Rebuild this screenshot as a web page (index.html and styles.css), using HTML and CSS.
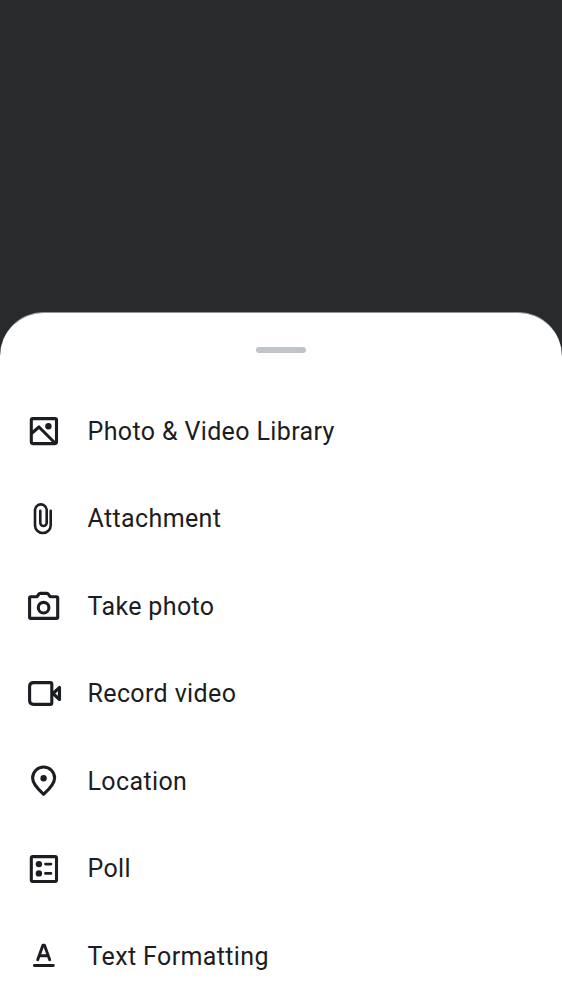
FILE: index.html
```html
<!DOCTYPE html>
<html lang="en">
<head><meta charset="utf-8"><title>Attach</title><link rel="stylesheet" href="styles.css"></head>
<body>
<main class="sheet">
<div class="handle"></div>
<ul class="menu">
<li class="item"><svg class="icon" viewBox="0 0 36 36"><rect x="6.3" y="5.600" width="25.200" height="25" rx="1.500"/><path d="M6.500 20.500l7.500-6.500L30.500 30.500"/><circle class="solid" cx="23.400" cy="13.300" r="3.200"/></svg><span class="label">Photo &amp; Video Library</span></li>
<li class="item"><svg class="icon" viewBox="0 -0.5 36 36"><path class="thin" d="M25.700 10.200v14.500a7.850 7.850 0 0 1-15.700 0V9.700a5.850 5.850 0 0 1 11.700 0v12.600a3.200 3.200 0 0 1-6.400 0V10.200"/></svg><span class="label">Attachment</span></li>
<li class="item"><svg class="icon" viewBox="0 0 36 36"><path d="M5.800 8.700h5.400q1 0 1.500-.8l1.100-1.700q.5-.8 1.500-.8h6.600q1 0 1.500.8l1.100 1.700q.5.800 1.500.8h5.500q1.200 0 1.200 1.200v19.300q0 1.200-1.200 1.200H5.800q-1.200 0-1.200-1.200V9.900q0-1.200 1.200-1.200z"/><circle cx="18.600" cy="19.700" r="5.300"/></svg><span class="label">Take photo</span></li>
<li class="item"><svg class="icon" viewBox="0 -0.5 36 36"><path d="M8.600 7.100h16.700q1.500 0 1.500 1.500v18.800q0 1.500-1.500 1.500H8.600q-4 0-4-4V11.100q0-4 4-4z"/><path d="M34.500 12v12L28 18z"/></svg><span class="label">Record video</span></li>
<li class="item"><svg class="icon" viewBox="0 0 36 36"><path d="M18.600 31.300C15 28 7.600 21.500 7.600 15a11 11 0 0 1 22 0C29.600 21.500 22.200 28 18.600 31.300z"/><circle class="solid" cx="18.600" cy="15.200" r="3.200"/></svg><span class="label">Location</span></li>
<li class="item"><svg class="icon" viewBox="0 -0.5 36 36"><rect x="6.300" y="6.100" width="25.200" height="24.900" rx="1.500"/><circle class="solid" cx="13.900" cy="13.600" r="3.200"/><circle class="solid" cx="13.900" cy="22.900" r="3.200"/><path class="round" d="M20.500 13.600h5.400M20.500 22.900h5.400"/></svg><span class="label">Poll</span></li>
<li class="item"><svg class="icon" viewBox="0 0 36 36"><path class="round" d="M9.400 27.500h18.900M12.700 21.700l5.200-14.400h1.600l5.200 14.400M14.700 17.800h8"/></svg><span class="label">Text Formatting</span></li>
</ul>
</main>
</body></html>
```
FILE: styles.css
```css
body { margin: 0; height: 1000px; overflow: hidden; background: #292a2c; box-sizing: border-box; padding-top: 312px; font-family: Roboto, sans-serif; color: #1b1d22; }
.sheet { box-sizing: border-box; height: 688px; background: #fff; border-top: 1px solid #949596; border-radius: 44px 44px 0 0; overflow: hidden; }
.handle { width: 50px; height: 6px; border-radius: 3px; background: #c0c3c8; margin: 34px auto; }
.menu { list-style: none; margin: 0; padding: 0; }
.item { display: flex; align-items: center; gap: 26.5px; height: 87.5px; padding-left: 25px; font-size: 25px; letter-spacing: .37px; }
.label { padding-top: 1px; }
.icon { width: 36px; height: 36px; fill: none; stroke: #1b1d22; stroke-width: 3.1; stroke-linejoin: round; overflow: visible; }
.solid { fill: #1b1d22; stroke: none; }
.thin { stroke-width: 2.600; stroke-linecap: round; }
.round { stroke-width: 2.900; stroke-linecap: round; }
```
